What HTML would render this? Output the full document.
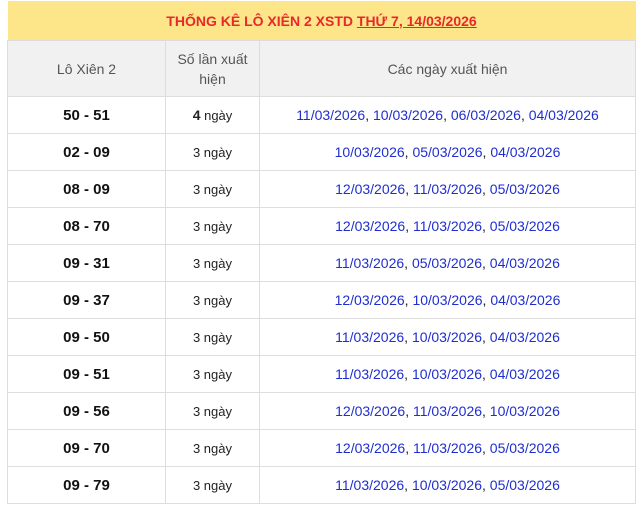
<!DOCTYPE html>
<html><head><meta charset="utf-8"><style>
body{margin:0;background:#fff;font-family:"Liberation Sans",Arial,sans-serif;}
table{position:absolute;left:7px;top:1px;width:629px;border-collapse:collapse;table-layout:fixed;}
td,th{border:1px solid #ddd;text-align:center;padding:0;}
.t{background:#fde58a;height:39px;color:#e8282a;font-weight:bold;font-size:14px;border:none;}
.t u{color:#e8282a}
th{background:#f1f1f1;color:#555;font-weight:normal;font-size:14px;height:55px;line-height:20px;}
td{height:36px;font-size:14px;color:#222;}
td.a{font-weight:bold;font-size:15px;color:#111;}
td.b{font-size:13px}
td.b b{font-size:14px}
.d{color:#1f2ecf}
</style></head><body>
<table>
<colgroup><col style="width:158px"><col style="width:94px"><col></colgroup>
<tr><td colspan="3" class="t">THỐNG KÊ LÔ XIÊN 2 XSTD <u>THỨ 7, 14/03/2026</u></td></tr>
<tr><th>Lô Xiên 2</th><th>Số lần xuất<br>hiện</th><th>Các ngày xuất hiện</th></tr>
<tr><td class="a">50 - 51</td><td class="b"><b>4</b> ngày</td><td><span class="d">11/03/2026</span>, <span class="d">10/03/2026</span>, <span class="d">06/03/2026</span>, <span class="d">04/03/2026</span></td></tr>
<tr><td class="a">02 - 09</td><td class="b">3 ngày</td><td><span class="d">10/03/2026</span>, <span class="d">05/03/2026</span>, <span class="d">04/03/2026</span></td></tr>
<tr><td class="a">08 - 09</td><td class="b">3 ngày</td><td><span class="d">12/03/2026</span>, <span class="d">11/03/2026</span>, <span class="d">05/03/2026</span></td></tr>
<tr><td class="a">08 - 70</td><td class="b">3 ngày</td><td><span class="d">12/03/2026</span>, <span class="d">11/03/2026</span>, <span class="d">05/03/2026</span></td></tr>
<tr><td class="a">09 - 31</td><td class="b">3 ngày</td><td><span class="d">11/03/2026</span>, <span class="d">05/03/2026</span>, <span class="d">04/03/2026</span></td></tr>
<tr><td class="a">09 - 37</td><td class="b">3 ngày</td><td><span class="d">12/03/2026</span>, <span class="d">10/03/2026</span>, <span class="d">04/03/2026</span></td></tr>
<tr><td class="a">09 - 50</td><td class="b">3 ngày</td><td><span class="d">11/03/2026</span>, <span class="d">10/03/2026</span>, <span class="d">04/03/2026</span></td></tr>
<tr><td class="a">09 - 51</td><td class="b">3 ngày</td><td><span class="d">11/03/2026</span>, <span class="d">10/03/2026</span>, <span class="d">04/03/2026</span></td></tr>
<tr><td class="a">09 - 56</td><td class="b">3 ngày</td><td><span class="d">12/03/2026</span>, <span class="d">11/03/2026</span>, <span class="d">10/03/2026</span></td></tr>
<tr><td class="a">09 - 70</td><td class="b">3 ngày</td><td><span class="d">12/03/2026</span>, <span class="d">11/03/2026</span>, <span class="d">05/03/2026</span></td></tr>
<tr><td class="a">09 - 79</td><td class="b">3 ngày</td><td><span class="d">11/03/2026</span>, <span class="d">10/03/2026</span>, <span class="d">05/03/2026</span></td></tr>
</table>
</body></html>
